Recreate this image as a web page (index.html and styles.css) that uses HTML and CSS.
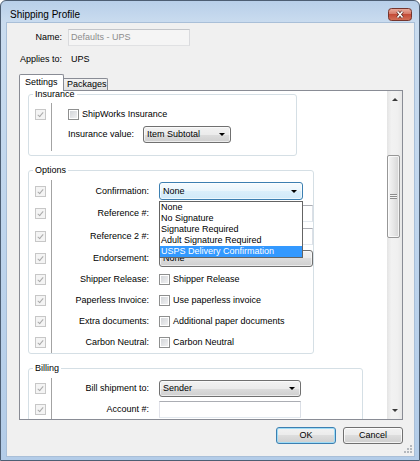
FILE: index.html
```html
<!DOCTYPE html>
<html>
  <head>
    <title>Shipping Profile</title>
    <meta charset="UTF-8">
    <link rel="stylesheet" href="styles.css">
  </head>
  <body>

<div class="window">

<!-- title bar -->
<div class="titlebar">
<span class="title">Shipping Profile</span>
<span class="close">
<svg width="24" height="13" viewBox="0 0 24 13">
<defs>
<linearGradient id="closeFill" x1="0" y1="0" x2="0" y2="1">
<stop offset="0" stop-color="#eab0a2"/>
<stop offset=".45" stop-color="#d77a68"/>
<stop offset=".5" stop-color="#c44b38"/>
<stop offset="1" stop-color="#d3735a"/>
</linearGradient>
</defs>
<rect x=".5" y=".5" width="23" height="12" rx="3" fill="url(#closeFill)" stroke="#75352d"/>
<path d="M9.5 3.5 L14.5 9.5 M14.5 3.5 L9.5 9.5" stroke="#5a2a24" stroke-width="3"/>
<path d="M9.5 3.5 L14.5 9.5 M14.5 3.5 L9.5 9.5" stroke="#fff" stroke-width="1.5"/>
</svg>
</span>
</div>

<div class="client">

<!-- profile header -->
<div class="head">
<span class="lbl">Name:</span>
<span class="textbox off">Defaults - UPS</span>
<span class="lbl">Applies to:</span>
<span class="val">UPS</span>
</div>

<div class="tabs">
<span class="tab on">Settings</span>
<span class="tab">Packages</span>
</div>

<div class="tabpage">
<div class="scroller">
<div class="content">

<!-- Insurance -->
<fieldset class="group insurance">
<legend>Insurance</legend>
<div class="ins-rows">
<div class="cc tall"><span class="chk dis"></span></div>
<div class="ct"><span class="chk"></span>ShipWorks Insurance</div>
<div class="ct top"><span class="inslabel">Insurance value:</span><span class="combo ins-combo">Item Subtotal</span></div>
</div>
</fieldset>

<!-- Options -->
<fieldset class="group options">
<legend>Options</legend>
<div class="opt-rows">
<div class="cc"><span class="chk dis"></span></div>
<div class="lb">Confirmation:</div>
<div class="ct"><span class="combo focus">None</span></div>

<div class="cc"><span class="chk dis"></span></div>
<div class="lb">Reference #:</div>
<div class="ct"><span class="textbox"></span></div>

<div class="cc"><span class="chk dis"></span></div>
<div class="lb">Reference 2 #:</div>
<div class="ct"><span class="textbox"></span></div>

<div class="cc"><span class="chk dis"></span></div>
<div class="lb">Endorsement:</div>
<div class="ct"><span class="combo plain">None</span></div>

<div class="cc"><span class="chk dis"></span></div>
<div class="lb">Shipper Release:</div>
<div class="ct"><span class="chk"></span>Shipper Release</div>

<div class="cc"><span class="chk dis"></span></div>
<div class="lb">Paperless Invoice:</div>
<div class="ct"><span class="chk"></span>Use paperless invoice</div>

<div class="cc"><span class="chk dis"></span></div>
<div class="lb">Extra documents:</div>
<div class="ct"><span class="chk"></span>Additional paper documents</div>

<div class="cc"><span class="chk dis"></span></div>
<div class="lb">Carbon Neutral:</div>
<div class="ct"><span class="chk"></span>Carbon Neutral</div>

<!-- open list of the Confirmation combo -->
<div class="droplist">
<div class="item">None</div>
<div class="item">No Signature</div>
<div class="item">Signature Required</div>
<div class="item">Adult Signature Required</div>
<div class="item sel">USPS Delivery Confirmation</div>
</div>
</div>
</fieldset>

<!-- Billing -->
<fieldset class="group billing">
<legend>Billing</legend>
<div class="bill-rows">
<div class="cc"><span class="chk dis"></span></div>
<div class="lb">Bill shipment to:</div>
<div class="ct"><span class="combo">Sender</span></div>

<div class="cc"><span class="chk dis"></span></div>
<div class="lb">Account #:</div>
<div class="ct"><span class="textbox"></span></div>

<div class="cc"></div>
<div class="lb"></div>
<div class="ct"></div>
</div>
</fieldset>

</div>
</div>

<!-- vertical scrollbar -->
<div class="vscroll">
<span class="sb-btn up"></span>
<span class="sb-track"><span class="thumb"><span class="grip-lines"></span></span></span>
<span class="sb-btn down"></span>
</div>
</div>

<div class="buttons">
<button class="btn def">OK</button>
<button class="btn">Cancel</button>
</div>

<span class="sizegrip">
<svg width="8" height="8" viewBox="0 0 8 8" fill="#b4b8bd">
<rect x="6" y="0" width="2" height="2"/>
<rect x="3" y="3" width="2" height="2"/>
<rect x="6" y="3" width="2" height="2"/>
<rect x="0" y="6" width="2" height="2"/>
<rect x="3" y="6" width="2" height="2"/>
<rect x="6" y="6" width="2" height="2"/>
</svg>
</span>

</div>
</div>

  </body>
</html>
```

FILE: styles.css
```css
body{
margin: 0;
font-family: "Liberation Sans", Arial, sans-serif;
font-size: 9px;
line-height: 11px;
color: #000;
}

/* window frame */
.window{
box-sizing: border-box;
width: 420px;
height: 461px;
padding: 0 5px 4px 6px;
border: 1px solid #4d5e73;
border-radius: 6px 6px 0 0;
background: linear-gradient(#b8cfe9, #cadcef 22px, #bfd5ed 50%, #b3cce8);
display: flex;
flex-direction: column;
}

.titlebar{
height: 22px;
flex: none;
display: flex;
justify-content: space-between;
align-items: flex-start;
}

.title{
margin: 8px 0 0 3px;
font-size: 10px;
line-height: 12px;
}

.close{
margin: 7px 2px 0 0;
width: 24px;
height: 13px;
}

.close svg, .sizegrip svg{
display: block;
}

.client{
flex: 1;
position: relative;
display: flex;
flex-direction: column;
padding: 6px 11px 0 12px;
background: #f0f0f0;
box-shadow: 0 0 0 1px #a9bfd8;
}

/* name / applies to */
.head{
display: grid;
grid-template-columns: 43px 122px;
grid-template-rows: 17px 14px;
gap: 6px;
align-items: center;
}

.lbl, .lb{
text-align: right;
white-space: nowrap;
}

.val{
padding-left: 3px;
}

.textbox{
box-sizing: border-box;
display: block;
height: 17px;
padding: 0 2px;
border: 1px solid;
border-color: #abadb3 #dbdfe6 #e3e9ef #e2e3ea;
background: #fff;
line-height: 15px;
}

.textbox.off{
border-color: #c3c5c9 #d9dadd #e0e1e3;
background: #f5f5f5;
color: #8d8d8d;
}

/* tabs */
.tabs{
display: flex;
align-items: flex-end;
height: 16px;
margin-top: 8px;
}

.tab{
box-sizing: border-box;
height: 12px;
width: 44px;
padding: 0 0 0 3px;
border: 1px solid #898c95;
border-left: 0;
border-bottom: 0;
border-radius: 0 2px 0 0;
background: linear-gradient(#f3f3f3, #e2e2e2);
line-height: 11px;
}

.tab.on{
position: relative;
z-index: 1;
height: 17px;
width: 45px;
margin-bottom: -1px;
padding: 2px 0 0 5px;
border-left: 1px solid #898c95;
border-radius: 2px 2px 0 0;
background: #fff;
}

.tabpage{
box-sizing: border-box;
height: 330px;
flex: none;
display: flex;
border: 1px solid #898c95;
background: #fff;
}

.scroller{
flex: 1;
min-width: 0;
overflow: hidden;
padding-left: 8px;
}

.content{
margin-top: -2px;
}

/* group boxes */
.group{
box-sizing: border-box;
min-width: 0;
margin: 0 0 9px;
padding: 4px 0 0;
border: 1px solid #d5dfe5;
border-radius: 3px;
}

.group legend{
margin-left: 4px;
padding: 0 2px;
line-height: 11px;
}

.insurance{
width: 269px;
padding: 3px 0 4px;
}

.options{
width: 286px;
}

.billing{
width: 335px;
}

.ins-rows{
display: grid;
grid-template-columns: 23px 246px;
grid-template-rows: 23px 25px;
}

.opt-rows, .bill-rows{
position: relative;
display: grid;
grid-template-columns: 23px 97px 164px;
align-items: center;
}

.opt-rows{
grid-template-rows: 22px 23px 22px 22px 21px 21px 21px 21px;
}

.bill-rows{
grid-template-columns: 23px 97px 152px;
grid-template-rows: 20px 22px 22px;
}

/* check column with its divider */
.cc{
box-sizing: border-box;
align-self: stretch;
display: flex;
align-items: center;
padding-left: 6px;
border-right: 1px solid #a3a3a3;
}

.cc.tall{
grid-row: span 2;
align-items: flex-start;
padding-top: 6px;
}

.ct{
box-sizing: border-box;
display: flex;
align-items: center;
gap: 3px;
padding-left: 10px;
white-space: nowrap;
}

.ins-rows .ct{
padding-left: 16px;
}

.ct.top{
align-items: flex-start;
gap: 0;
}

.inslabel{
line-height: 17px;
}

.opt-rows .textbox, .opt-rows .combo{
flex: none;
width: 154px;
}

.bill-rows .textbox, .bill-rows .combo{
flex: none;
width: 142px;
}

/* checkboxes */
.chk{
box-sizing: border-box;
position: relative;
flex: none;
width: 11px;
height: 11px;
border: 1px solid #8e8f8f;
background: linear-gradient(135deg, #cfd2d6, #f4f4f5);
box-shadow: inset 0 0 0 1px #fff;
}

.chk.dis{
border-color: #c7c7c7;
background: #f4f4f4;
box-shadow: none;
}

.chk.dis::after{
content: "";
position: absolute;
left: 3px;
top: 1px;
width: 2px;
height: 5px;
border: solid #aaaaaa;
border-width: 0 1px 1px 0;
transform: rotate(40deg);
}

/* drop-down combos */
.combo{
box-sizing: border-box;
height: 17px;
display: flex;
align-items: center;
justify-content: space-between;
padding: 0 5px 0 3px;
border: 1px solid #707070;
border-radius: 3px;
background: linear-gradient(#f2f2f2, #ebebeb 50%, #dddddd 50%, #cfcfcf);
box-shadow: inset 0 0 0 1px rgba(255, 255, 255, .6);
}

.combo::after{
content: "";
border-left: 3px solid transparent;
border-right: 3px solid transparent;
border-top: 3px solid #000;
}

.combo.plain::after{
content: none;
}

.ins-combo{
flex: none;
width: 88px;
margin-left: 9px;
}

.opt-rows .combo.focus{
width: 144px;
height: 18px;
border-color: #3c7fb1;
background: linear-gradient(#f6fbfe, #e9f5fc 50%, #dbeffb 50%, #d0eaf9);
}

.droplist{
box-sizing: border-box;
position: absolute;
z-index: 2;
left: 130px;
top: 21px;
width: 144px;
border: 1px solid #646464;
background: #fff;
}

.item{
padding-left: 1px;
line-height: 11px;
}

.item.sel{
background: #3399ff;
color: #fff;
}

/* scrollbar */
.vscroll{
width: 15px;
flex: none;
display: flex;
flex-direction: column;
background: linear-gradient(to right, #e4e4e4, #f2f2f2 30%, #f0f0f0 70%, #e7e7e7);
}

.sb-btn{
height: 17px;
display: flex;
align-items: center;
justify-content: center;
}

.sb-btn::after{
content: "";
border-left: 3px solid transparent;
border-right: 3px solid transparent;
}

.sb-btn.up::after{
border-bottom: 3px solid #3a3a3a;
}

.sb-btn.down::after{
border-top: 3px solid #3a3a3a;
}

.sb-track{
flex: 1;
}

.thumb{
box-sizing: border-box;
display: flex;
align-items: center;
justify-content: center;
height: 83px;
margin: 47px 2px 0 0;
border: 1px solid #979797;
border-radius: 2px;
background: linear-gradient(to right, #f6f6f6, #e7e7e7 50%, #d5d5d5);
box-shadow: inset 0 0 0 1px rgba(255, 255, 255, .7);
}

.grip-lines{
width: 7px;
height: 5px;
background: repeating-linear-gradient(#8c8c8c 0 1px, #f4f4f4 1px 2px);
}

/* dialog buttons */
.buttons{
display: flex;
justify-content: flex-end;
gap: 7px;
margin-top: 7px;
}

.btn{
box-sizing: border-box;
width: 60px;
height: 17px;
padding: 0;
font: inherit;
color: #000;
border: 1px solid #707070;
border-radius: 3px;
background: linear-gradient(#f2f2f2, #ebebeb 50%, #dddddd 50%, #cfcfcf);
box-shadow: inset 0 0 0 1px rgba(255, 255, 255, .75);
}

.btn.def{
border-color: #3c7fb1;
box-shadow: inset 0 0 0 1px #9fdcf6;
}

.sizegrip{
position: absolute;
right: 2px;
bottom: 3px;
}
```
